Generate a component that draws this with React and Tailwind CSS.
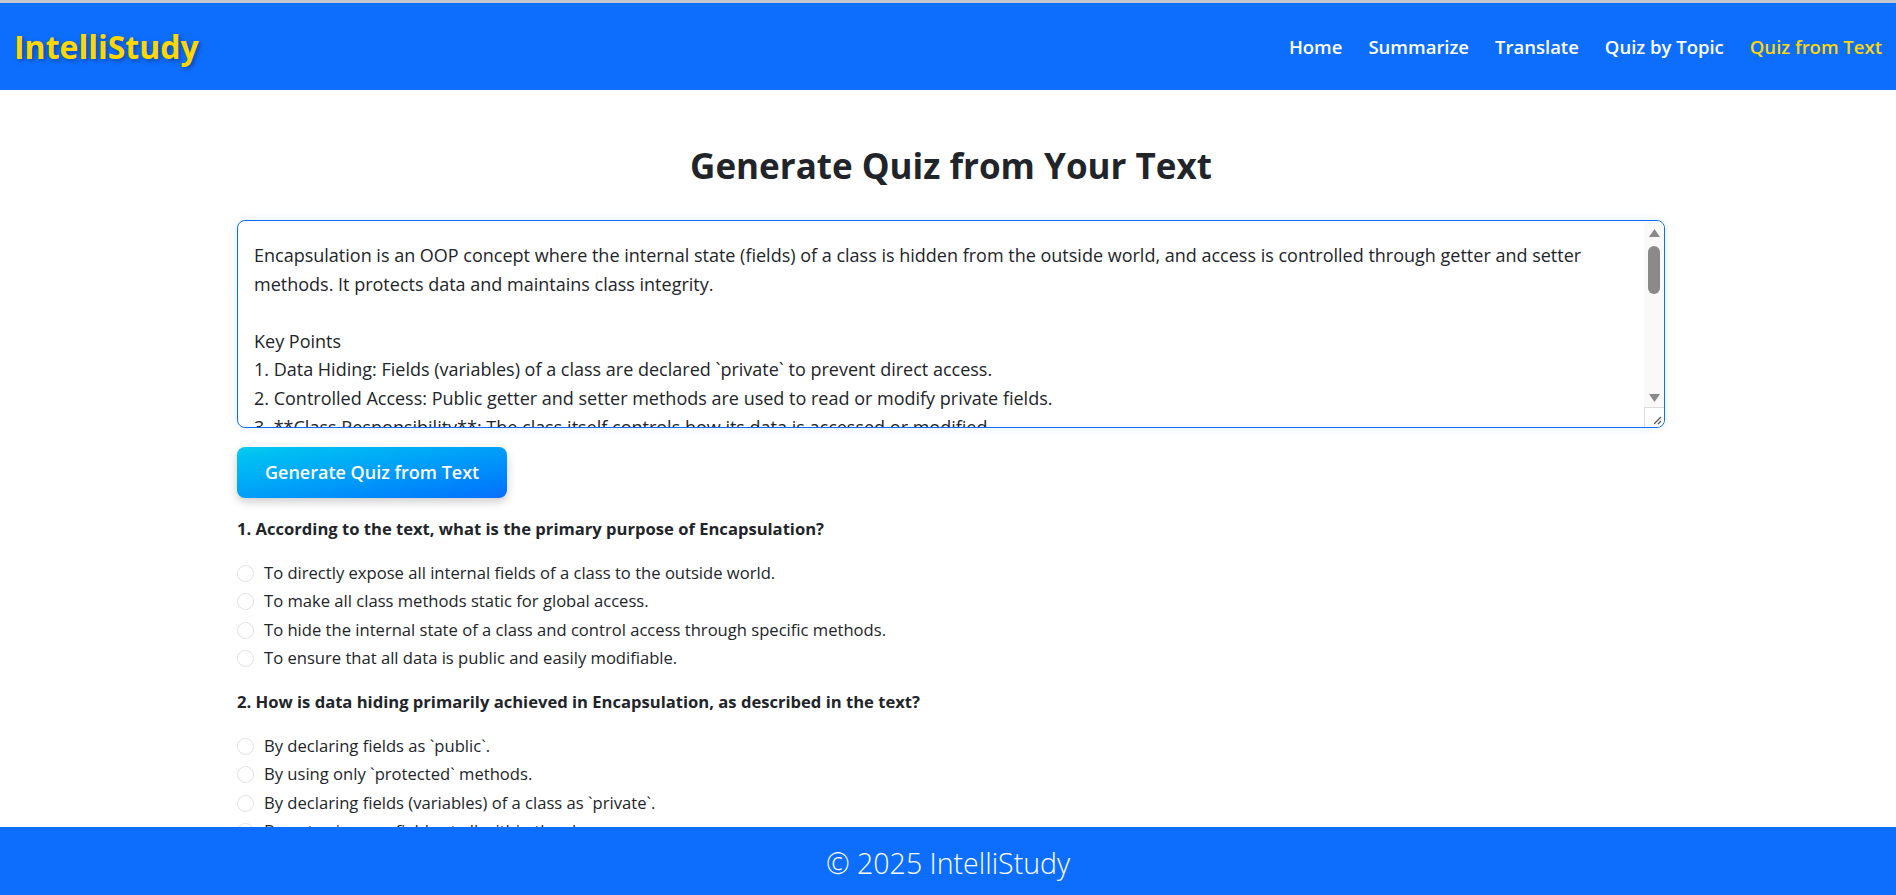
import { useState } from 'react'

const textoInicial = `Encapsulation is an OOP concept where the internal state (fields) of a class is hidden from the outside world, and access is controlled through getter and setter methods. It protects data and maintains class integrity.

Key Points
1. Data Hiding: Fields (variables) of a class are declared \`private\` to prevent direct access.
2. Controlled Access: Public getter and setter methods are used to read or modify private fields.
3. **Class Responsibility**: The class itself controls how its data is accessed or modified.
4. **Flexibility**: Internal implementation can change without affecting outside code.`

const perguntas = [
  {
    titulo: '1. According to the text, what is the primary purpose of Encapsulation?',
    opcoes: [
      'To directly expose all internal fields of a class to the outside world.',
      'To make all class methods static for global access.',
      'To hide the internal state of a class and control access through specific methods.',
      'To ensure that all data is public and easily modifiable.',
    ],
  },
  {
    titulo: '2. How is data hiding primarily achieved in Encapsulation, as described in the text?',
    opcoes: [
      'By declaring fields as `public`.',
      'By using only `protected` methods.',
      'By declaring fields (variables) of a class as `private`.',
      'By not using any fields at all within the class.',
    ],
  },
]

const links = ['Home', 'Summarize', 'Translate', 'Quiz by Topic', 'Quiz from Text']

function BarraRolagem() {
  // scrollbar desenhada à mão, igual à do Windows
  return (
    <div className="absolute top-[1px] right-[1px] bottom-[1px] w-[20px] flex flex-col bg-[#f9f9f9] rounded-tr-[8px] rounded-br-[8px]">
      <div className="h-[20px] flex items-center justify-center pt-[4px]">
        <svg width="11" height="8" viewBox="0 0 11 8"><path d="M5.5 0 L11 8 L0 8 Z" fill="#8a8a8a" /></svg>
      </div>
      <div className="flex-1 px-[4px] pt-[5px]">
        <div className="h-[48px] rounded-full bg-[#8a8a8a]" />
      </div>
      <div className="h-[18px] flex items-center justify-center">
        <svg width="11" height="8" viewBox="0 0 11 8"><path d="M0 0 L11 0 L5.5 8 Z" fill="#8a8a8a" /></svg>
      </div>
      <div className="h-[20px] border-l border-t border-[#dcdcdc] bg-white flex items-end justify-end pr-[2px] pb-[2px] rounded-br-[8px]">
        <svg width="10" height="10" viewBox="0 0 10 10">
          <path d="M9 2 L2 9 M9 6 L6 9" stroke="#555" strokeWidth="1.3" />
        </svg>
      </div>
    </div>
  )
}

export default function App() {
  const [texto, setTexto] = useState(textoInicial)
  const [respostas, setRespostas] = useState({})

  return (
    <div className="min-h-screen bg-white text-[#212529]" style={{ fontFamily: '"Open Sans", "Noto Sans", sans-serif' }}>
      <header className="border-t-[3px] border-[#c3c7ce] bg-[#0d6efd] h-[90px] flex items-center justify-between pl-[14px] pr-[14px]">
        <span className="text-[32px] font-bold text-[#ffd700] [text-shadow:2px_2px_4px_rgba(0,0,0,0.35)]">IntelliStudy</span>
        <nav className="flex items-center gap-[26px]">
          {links.map((l) => (
            <a key={l} href="#" className={`text-[18.5px] font-semibold ${l === 'Quiz from Text' ? 'text-[#ffd700]' : 'text-white'}`}>
              {l}
            </a>
          ))}
        </nav>
      </header>

      <main className="w-[1428px] ml-[237px] pb-[100px]">
        <h2 className="mt-[55px] text-center text-[35px] leading-[1.2] font-bold">Generate Quiz from Your Text</h2>

        <div className="relative mt-[33px]">
          <textarea
            value={texto}
            onChange={(e) => setTexto(e.target.value)}
            className="block w-full h-[208px] resize-none overflow-hidden border border-[#0d6efd] rounded-[8px] pl-4 pr-[24px] pt-[20px] text-[18px] leading-[28.6px] text-[#212529] outline-none shadow-[0_0_10px_rgba(13,110,253,0.12)]"
          />
          <BarraRolagem />
        </div>

        <button className="mt-[19px] h-[51px] px-[28px] rounded-[8px] text-white text-[18px] font-semibold bg-gradient-to-br from-[#0dcaf0] to-[#0d6efd] shadow-[0_4px_10px_rgba(0,0,0,0.2)]">
          Generate Quiz from Text
        </button>

        {perguntas.map((p, i) => (
          <div key={i} className={i === 0 ? 'mt-[19px]' : 'mt-[17px]'}>
            <p className="text-[16.6px] leading-[24px] font-bold">{p.titulo}</p>
            <div className="mt-[18px] flex flex-col">
              {p.opcoes.map((o, j) => (
                <label key={j} className="flex items-center gap-[10px] h-[28.5px] text-[16.6px]">
                  <input
                    type="radio"
                    name={`q${i}`}
                    checked={respostas[i] === j}
                    onChange={() => setRespostas({ ...respostas, [i]: j })}
                    className="appearance-none w-[17px] h-[17px] rounded-full border border-[#dee2e6] bg-white shrink-0"
                  />
                  <span>{o}</span>
                </label>
              ))}
            </div>
          </div>
        ))}
      </main>

      <footer className="fixed bottom-0 left-0 right-0 h-[68px] bg-[#0d6efd] flex items-center justify-center pt-[4px]">
        <span className="text-white text-[28.5px] font-light">© 2025 IntelliStudy</span>
      </footer>
    </div>
  )
}
